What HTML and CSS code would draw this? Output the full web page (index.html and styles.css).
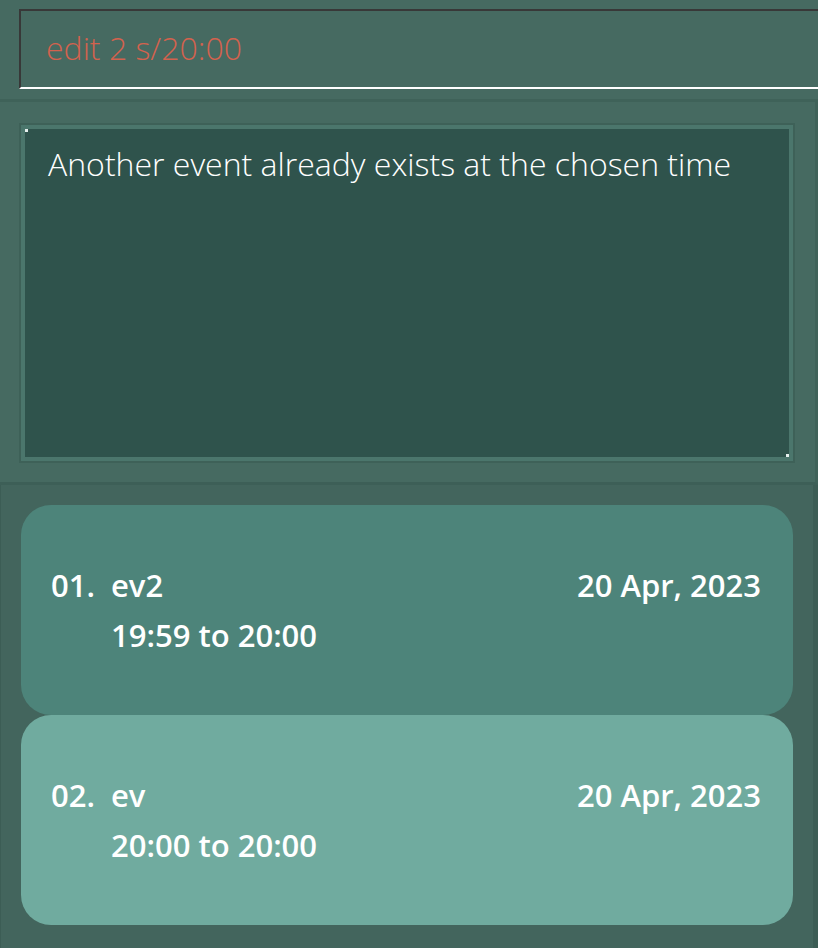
FILE: index.html
```html
<!DOCTYPE html>
<html lang="en">
<head>
<meta charset="utf-8">
<title>Events</title>
<link rel="stylesheet" href="styles.css">
</head>
<body>
<div class="app">
  <div class="command-bar">
    <div class="command-input">edit 2 s/20:00</div>
  </div>
  <div class="result-pane">
    <div class="result-box">
      <div class="result-inner">
        <span class="corner corner-tl"></span>
        <div class="result-text">Another event already exists at the chosen time</div>
        <span class="corner corner-br"></span>
      </div>
    </div>
  </div>
  <div class="list-pane">
    <div class="card card-odd">
      <div class="card-row">
        <span class="card-index">01.</span>
        <span class="card-name">ev2</span>
        <span class="card-date">20 Apr, 2023</span>
      </div>
      <div class="card-time">19:59 to 20:00</div>
    </div>
    <div class="card card-even">
      <div class="card-row">
        <span class="card-index">02.</span>
        <span class="card-name">ev</span>
        <span class="card-date">20 Apr, 2023</span>
      </div>
      <div class="card-time">20:00 to 20:00</div>
    </div>
  </div>
</div>
</body>
</html>
```

FILE: styles.css
```css
html, body {
  margin: 0;
  padding: 0;
}
body {
  background: #466a61;
  font-family: "Open Sans", "Noto Sans", sans-serif;
  width: 818px;
  height: 948px;
  overflow: hidden;
}
.app {
  display: flex;
  flex-direction: column;
  height: 948px;
}
.command-bar {
  padding: 9px 0 10px 19px;
  border-bottom: 3px solid #3f6259;
}
.command-input {
  height: 73px;
  border-top: 2px solid #383838;
  border-left: 2px solid #383838;
  border-bottom: 2px solid #ffffff;
  padding-left: 25px;
  padding-bottom: 3px;
  display: flex;
  align-items: center;
  font-weight: 300;
  font-size: 32px;
  color: #d3624e;
}
.result-pane {
  padding: 21px 20px 19px 19px;
  border-right: 3px solid #3f6259;
  border-bottom: 3px solid #3d5f57;
}
.result-box {
  width: 772px;
  height: 336px;
  border: 2px solid #3e6158;
}
.result-inner {
  position: relative;
  height: 328px;
  border: 4px solid #4b766c;
  background: #2f534c;
  padding: 0 23px;
}
.corner {
  position: absolute;
  width: 3px;
  height: 3px;
  background: #e6f0ee;
}
.corner-tl { left: 0; top: 0; }
.corner-br { right: 0; bottom: 0; }
.result-text {
  padding-top: 12px;
  font-weight: 300;
  font-size: 32px;
  line-height: 46px;
  color: #ffffff;
}
.list-pane {
  flex: 1;
  background: #43655d;
  border-left: 1px solid #3c5d55;
  border-right: 5px solid #3c5d55;
  padding: 20px 20px 0 20px;
  display: flex;
  flex-direction: column;
}
.card {
  height: 210px;
  border-radius: 30px;
  padding: 0 32px 0 30px;
  display: flex;
  flex-direction: column;
  justify-content: center;
  color: #ffffff;
  font-weight: 600;
  font-size: 31px;
  box-sizing: border-box;
}
.card-odd { background: #4d847a; }
.card-even { background: #70ab9f; }
.card-row {
  display: flex;
  align-items: baseline;
  height: 50px;
  line-height: 50px;
}
.card-index {
  width: 60px;
}
.card-name {
  flex: 1;
}
.card-time {
  padding-left: 60px;
  height: 50px;
  line-height: 50px;
}
```
